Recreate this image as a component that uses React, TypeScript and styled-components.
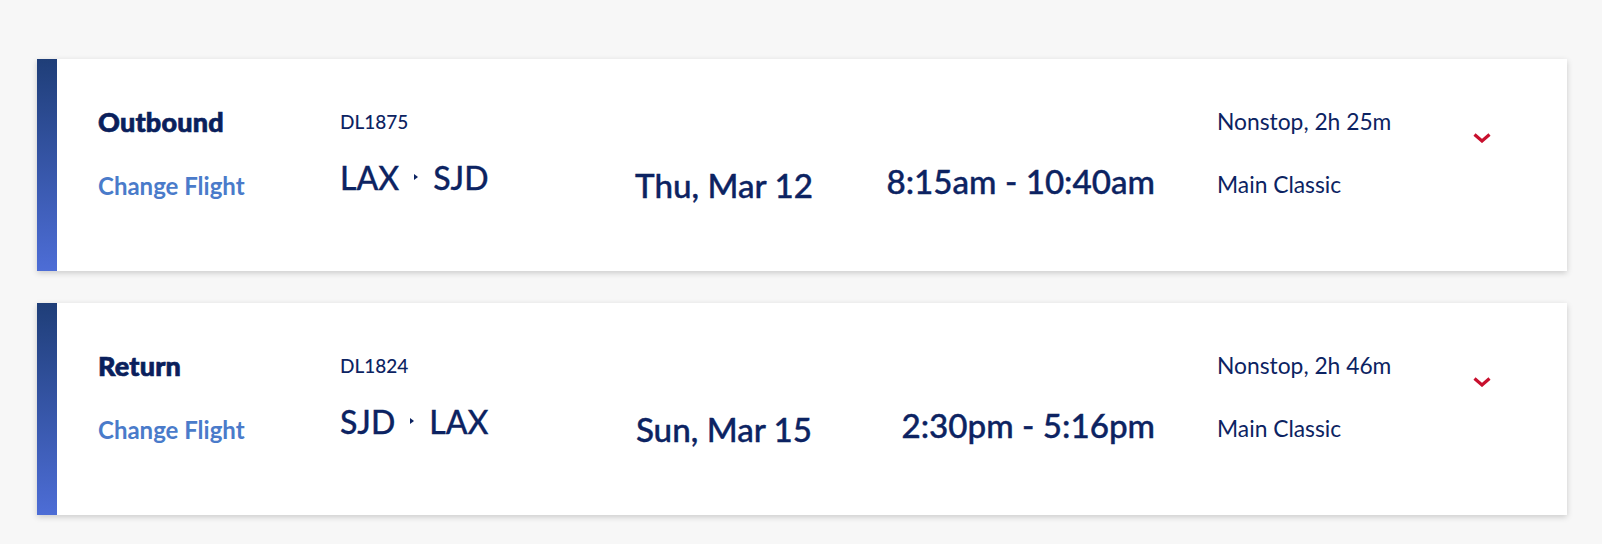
import React from 'react';
import styled, { createGlobalStyle } from 'styled-components';

const GlobalStyle = createGlobalStyle`
  html, body {
    margin: 0;
    padding: 0;
    background: #f7f7f7;
  }
  body {
    font-family: Lato, 'Noto Sans', sans-serif;
    color: #0c2362;
  }
`;

type Flight = {
  id: number;
  label: string;
  flightNo: string;
  from: string;
  to: string;
  date: string;
  time: string;
  stops: string;
  fare: string;
};

const flights: Flight[] = [
  {
    id: 1,
    label: 'Outbound',
    flightNo: 'DL1875',
    from: 'LAX',
    to: 'SJD',
    date: 'Thu, Mar 12',
    time: '8:15am - 10:40am',
    stops: 'Nonstop, 2h 25m',
    fare: 'Main Classic',
  },
  {
    id: 2,
    label: 'Return',
    flightNo: 'DL1824',
    from: 'SJD',
    to: 'LAX',
    date: 'Sun, Mar 15',
    time: '2:30pm - 5:16pm',
    stops: 'Nonstop, 2h 46m',
    fare: 'Main Classic',
  },
];

function App() {
  return (
    <>
      <GlobalStyle />
      <Page>
        {flights.map((f) => (
          <Card key={f.id}>
            <Bar />
            <Content>
              <Column $top={0} $gap={39}>
                <Title>{f.label}</Title>
                <ChangeLink href="#">Change Flight</ChangeLink>
              </Column>
              <Column $top={4} $gap={31}>
                <FlightNo>{f.flightNo}</FlightNo>
                <Route>
                  <span>{f.from}</span>
                  <RouteArrow width="4" height="6" viewBox="0 0 4 6">
                    <path d="M0 0 L4 3 L0 6 Z" fill="#0c2362" />
                  </RouteArrow>
                  <span>{f.to}</span>
                </Route>
              </Column>
              <Column $top={61} $gap={0} $align="center">
                <BigText>{f.date}</BigText>
              </Column>
              <Column $top={57} $gap={0} $align="flex-end">
                <BigText>{f.time}</BigText>
              </Column>
              <Info>
                <InfoText>{f.stops}</InfoText>
                <InfoText>{f.fare}</InfoText>
              </Info>
              <Toggle aria-label="Show details">
                <svg width="18" height="10" viewBox="0 0 18 10">
                  <path
                    d="M1.5 1.5 L9 8 L16.5 1.5"
                    fill="none"
                    stroke="#c8102e"
                    strokeWidth="3.2"
                  />
                </svg>
              </Toggle>
            </Content>
          </Card>
        ))}
      </Page>
    </>
  );
}

const Page = styled.div`
  display: flex;
  flex-direction: column;
  gap: 32px;
  padding: 59px 35px 30px 37px;
`;

const Card = styled.div`
  display: flex;
  height: 212px;
  background: #fff;
  box-shadow: 0 2px 6px rgba(0, 0, 0, 0.18);
`;

const Bar = styled.div`
  flex: 0 0 20px;
  background: linear-gradient(180deg, #1f3e78 0%, #4d6dd6 100%);
`;

const Content = styled.div`
  flex: 1;
  display: grid;
  grid-template-columns: 242px 264px 240px 311px 1fr 20px;
  align-items: start;
  padding: 49px 75px 0 41px;
`;

const Column = styled.div<{ $top: number; $gap: number; $align?: string }>`
  display: flex;
  flex-direction: column;
  align-items: ${(p) => p.$align || 'flex-start'};
  gap: ${(p) => p.$gap}px;
  padding-top: ${(p) => p.$top}px;
`;

const Title = styled.div`
  font-size: 27px;
  line-height: 1;
  font-weight: 900;
  letter-spacing: 0.2px;
  color: #0a1f5c;
  -webkit-text-stroke: 0.7px #0a1f5c;
`;

const ChangeLink = styled.a`
  font-size: 24px;
  line-height: 1;
  font-weight: 700;
  color: #4a7bca;
  text-decoration: none;
`;

const FlightNo = styled.div`
  font-size: 19px;
  line-height: 1;
  font-weight: 500;
`;

const Route = styled.div`
  display: flex;
  align-items: center;
  gap: 15px;
  font-size: 32px;
  line-height: 1;
  font-weight: 500;
  -webkit-text-stroke: 0.3px #0c2362;
`;

const RouteArrow = styled.svg`
  display: block;
  margin-top: -3px;
`;

const BigText = styled.div`
  font-size: 33.2px;
  line-height: 1;
  font-weight: 500;
  white-space: nowrap;
  -webkit-text-stroke: 0.4px #0c2362;
`;

const Info = styled.div`
  display: flex;
  flex-direction: column;
  gap: 40px;
  padding: 2px 0 0 62px;
`;

const InfoText = styled.div`
  font-size: 22.8px;
  line-height: 1;
  font-weight: 400;
  white-space: nowrap;
`;

const Toggle = styled.button`
  display: flex;
  justify-content: center;
  width: 20px;
  padding: 0;
  margin-top: 25px;
  border: 0;
  background: none;
  cursor: pointer;
`;

export default App;
